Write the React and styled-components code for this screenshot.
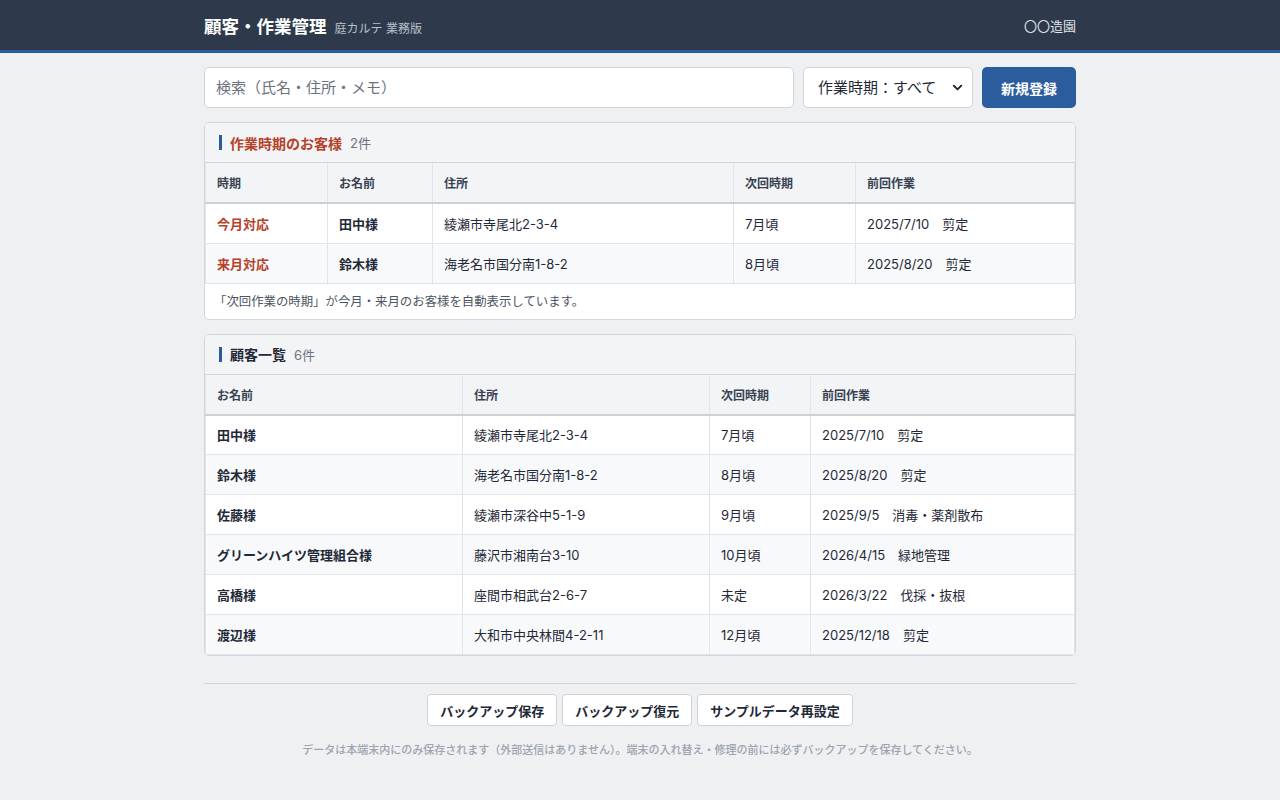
import React from 'react';
import styled, { createGlobalStyle } from 'styled-components';
import { ChevronDown } from 'lucide-react';

const GlobalStyle = createGlobalStyle`
  body {
    margin: 0;
    background: #eff0f2;
    font-family: Inter, "Noto Sans CJK JP", "Noto Sans", sans-serif;
    color: #1f2937;
  }
  * { box-sizing: border-box; }
`;

const TopBar = styled.header`
  height: 53px;
  background: #2e3a4b;
  border-bottom: 3px solid #2b5c9e;
`;

const Inner = styled.div`
  width: 872px;
  margin: 0 auto;
`;

const TopInner = styled(Inner)`
  height: 50px;
  display: flex;
  align-items: center;
  justify-content: space-between;
`;

const Brand = styled.div`
  display: flex;
  align-items: baseline;
  gap: 8px;
`;

const Title = styled.h1`
  margin: 0;
  font-size: 17.5px;
  font-weight: 700;
  color: #ffffff;
`;

const Sub = styled.span`
  font-size: 12px;
  color: #b8c0cc;
`;

const Company = styled.span`
  font-size: 13px;
  color: #e5e7eb;
`;

const Main = styled(Inner)`
  padding-top: 14px;
`;

const SearchRow = styled.div`
  display: flex;
  gap: 9px;
  margin-bottom: 14px;
`;

const SearchInput = styled.input`
  flex: 1;
  height: 41px;
  padding: 0 11px;
  border: 1px solid #cfd4da;
  border-radius: 5px;
  background: #fff;
  font-family: inherit;
  font-size: 15px;
  color: #1f2937;
  &::placeholder { color: #6b7280; }
`;

const SelectWrap = styled.div`
  position: relative;
  width: 170px;
`;

const Select = styled.select`
  appearance: none;
  width: 100%;
  height: 41px;
  padding: 0 14px;
  border: 1px solid #cfd4da;
  border-radius: 5px;
  background: #fff;
  font-family: inherit;
  font-size: 15px;
  color: #1f2937;
`;

const SelectIcon = styled.span`
  position: absolute;
  right: 8px;
  top: 13px;
  pointer-events: none;
  color: #222;
  display: flex;
`;

const PrimaryButton = styled.button`
  width: 94px;
  height: 41px;
  border: none;
  border-radius: 5px;
  background: #2b5c9e;
  color: #fff;
  font-family: inherit;
  font-size: 14px;
  font-weight: 700;
`;

const Card = styled.section`
  background: #fff;
  border: 1px solid #d3d7dd;
  border-radius: 5px;
  overflow: hidden;
  margin-bottom: 14px;
`;

const CardHead = styled.div`
  height: 40px;
  display: flex;
  align-items: center;
  gap: 8px;
  padding-left: 14px;
  background: #f3f4f6;
  border-bottom: 1px solid #d3d7dd;
`;

const CardTitle = styled.h2`
  margin: 0;
  display: flex;
  align-items: center;
  gap: 8px;
  font-size: 14px;
  font-weight: 700;
  color: ${p => (p.$accent ? '#b5432a' : '#1f2937')};
  &::before {
    content: '';
    width: 3px;
    height: 15px;
    background: #2b5c9e;
  }
`;

const Count = styled.span`
  font-size: 13px;
  color: #6b7280;
`;

const Table = styled.table`
  width: 100%;
  border-collapse: collapse;
  table-layout: fixed;
`;

const Th = styled.th`
  height: 40px;
  padding: 0 11px;
  text-align: left;
  font-size: 12px;
  font-weight: 700;
  color: #374151;
  background: #f3f4f6;
  border: 1px solid #e1e4e8;
  border-top: none;
  border-bottom: 2px solid #cdd1d7;
`;

const Tr = styled.tr`
  background: ${p => (p.$alt ? '#f8f9fb' : '#fff')};
`;

const Td = styled.td`
  height: 40px;
  padding: 0 11px;
  font-size: 13px;
  color: ${p => (p.$tone === 'alert' ? '#b5432a' : '#1f2937')};
  font-weight: ${p => (p.$bold ? 700 : 400)};
  border: 1px solid #e1e4e8;
  white-space: nowrap;
`;

const Note = styled.p`
  margin: 0;
  height: 35px;
  display: flex;
  align-items: center;
  padding-left: 9px;
  font-size: 12.4px;
  color: #4b5563;
`;

const Footer = styled.footer`
  margin-top: 27px;
  border-top: 1px solid #cfd3d9;
  padding-top: 10px;
  display: flex;
  flex-direction: column;
  align-items: center;
  gap: 15px;
`;

const ButtonRow = styled.div`
  display: flex;
  gap: 5px;
`;

const GhostButton = styled.button`
  height: 32px;
  padding: 0 12px;
  background: #fff;
  border: 1px solid #cfd3d9;
  border-radius: 4px;
  font-family: inherit;
  font-size: 13px;
  font-weight: 700;
  color: #1f2937;
`;

const Fine = styled.p`
  margin: 0;
  font-size: 11px;
  font-weight: 500;
  color: #9ca3af;
`;

const dueRows = [
  { when: '今月対応', name: '田中様', addr: '綾瀬市寺尾北2-3-4', next: '7月頃', last: '2025/7/10　剪定' },
  { when: '来月対応', name: '鈴木様', addr: '海老名市国分南1-8-2', next: '8月頃', last: '2025/8/20　剪定' },
];

const customers = [
  { name: '田中様', addr: '綾瀬市寺尾北2-3-4', next: '7月頃', last: '2025/7/10　剪定' },
  { name: '鈴木様', addr: '海老名市国分南1-8-2', next: '8月頃', last: '2025/8/20　剪定' },
  { name: '佐藤様', addr: '綾瀬市深谷中5-1-9', next: '9月頃', last: '2025/9/5　消毒・薬剤散布' },
  { name: 'グリーンハイツ管理組合様', addr: '藤沢市湘南台3-10', next: '10月頃', last: '2026/4/15　緑地管理' },
  { name: '高橋様', addr: '座間市相武台2-6-7', next: '未定', last: '2026/3/22　伐採・抜根' },
  { name: '渡辺様', addr: '大和市中央林間4-2-11', next: '12月頃', last: '2025/12/18　剪定' },
];

export default function App() {
  return (
    <>
      <GlobalStyle />
      <TopBar>
        <TopInner>
          <Brand>
            <Title>顧客・作業管理</Title>
            <Sub>庭カルテ 業務版</Sub>
          </Brand>
          <Company>〇〇造園</Company>
        </TopInner>
      </TopBar>

      <Main>
        <SearchRow>
          <SearchInput placeholder="検索（氏名・住所・メモ）" />
          <SelectWrap>
            <Select defaultValue="all">
              <option value="all">作業時期：すべて</option>
            </Select>
            <SelectIcon>
              <ChevronDown size={15} strokeWidth={3} />
            </SelectIcon>
          </SelectWrap>
          <PrimaryButton>新規登録</PrimaryButton>
        </SearchRow>

        <Card>
          <CardHead>
            <CardTitle $accent>作業時期のお客様</CardTitle>
            <Count>2件</Count>
          </CardHead>
          <Table>
            <colgroup>
              <col style={{ width: 122 }} />
              <col style={{ width: 105 }} />
              <col style={{ width: 301 }} />
              <col style={{ width: 122 }} />
              <col />
            </colgroup>
            <thead>
              <tr>
                <Th>時期</Th>
                <Th>お名前</Th>
                <Th>住所</Th>
                <Th>次回時期</Th>
                <Th>前回作業</Th>
              </tr>
            </thead>
            <tbody>
              {dueRows.map((r, i) => (
                <Tr key={r.name} $alt={i % 2 === 1}>
                  <Td $tone="alert" $bold>{r.when}</Td>
                  <Td $bold>{r.name}</Td>
                  <Td>{r.addr}</Td>
                  <Td>{r.next}</Td>
                  <Td>{r.last}</Td>
                </Tr>
              ))}
            </tbody>
          </Table>
          <Note>「次回作業の時期」が今月・来月のお客様を自動表示しています。</Note>
        </Card>

        <Card>
          <CardHead>
            <CardTitle>顧客一覧</CardTitle>
            <Count>6件</Count>
          </CardHead>
          <Table>
            <colgroup>
              <col style={{ width: 257 }} />
              <col style={{ width: 247 }} />
              <col style={{ width: 101 }} />
              <col />
            </colgroup>
            <thead>
              <tr>
                <Th>お名前</Th>
                <Th>住所</Th>
                <Th>次回時期</Th>
                <Th>前回作業</Th>
              </tr>
            </thead>
            <tbody>
              {customers.map((r, i) => (
                <Tr key={r.name} $alt={i % 2 === 1}>
                  <Td $bold>{r.name}</Td>
                  <Td>{r.addr}</Td>
                  <Td>{r.next}</Td>
                  <Td>{r.last}</Td>
                </Tr>
              ))}
            </tbody>
          </Table>
        </Card>

        <Footer>
          <ButtonRow>
            <GhostButton>バックアップ保存</GhostButton>
            <GhostButton>バックアップ復元</GhostButton>
            <GhostButton>サンプルデータ再設定</GhostButton>
          </ButtonRow>
          <Fine>
            データは本端末内にのみ保存されます（外部送信はありません）。端末の入れ替え・修理の前には必ずバックアップを保存してください。
          </Fine>
        </Footer>
      </Main>
    </>
  );
}
